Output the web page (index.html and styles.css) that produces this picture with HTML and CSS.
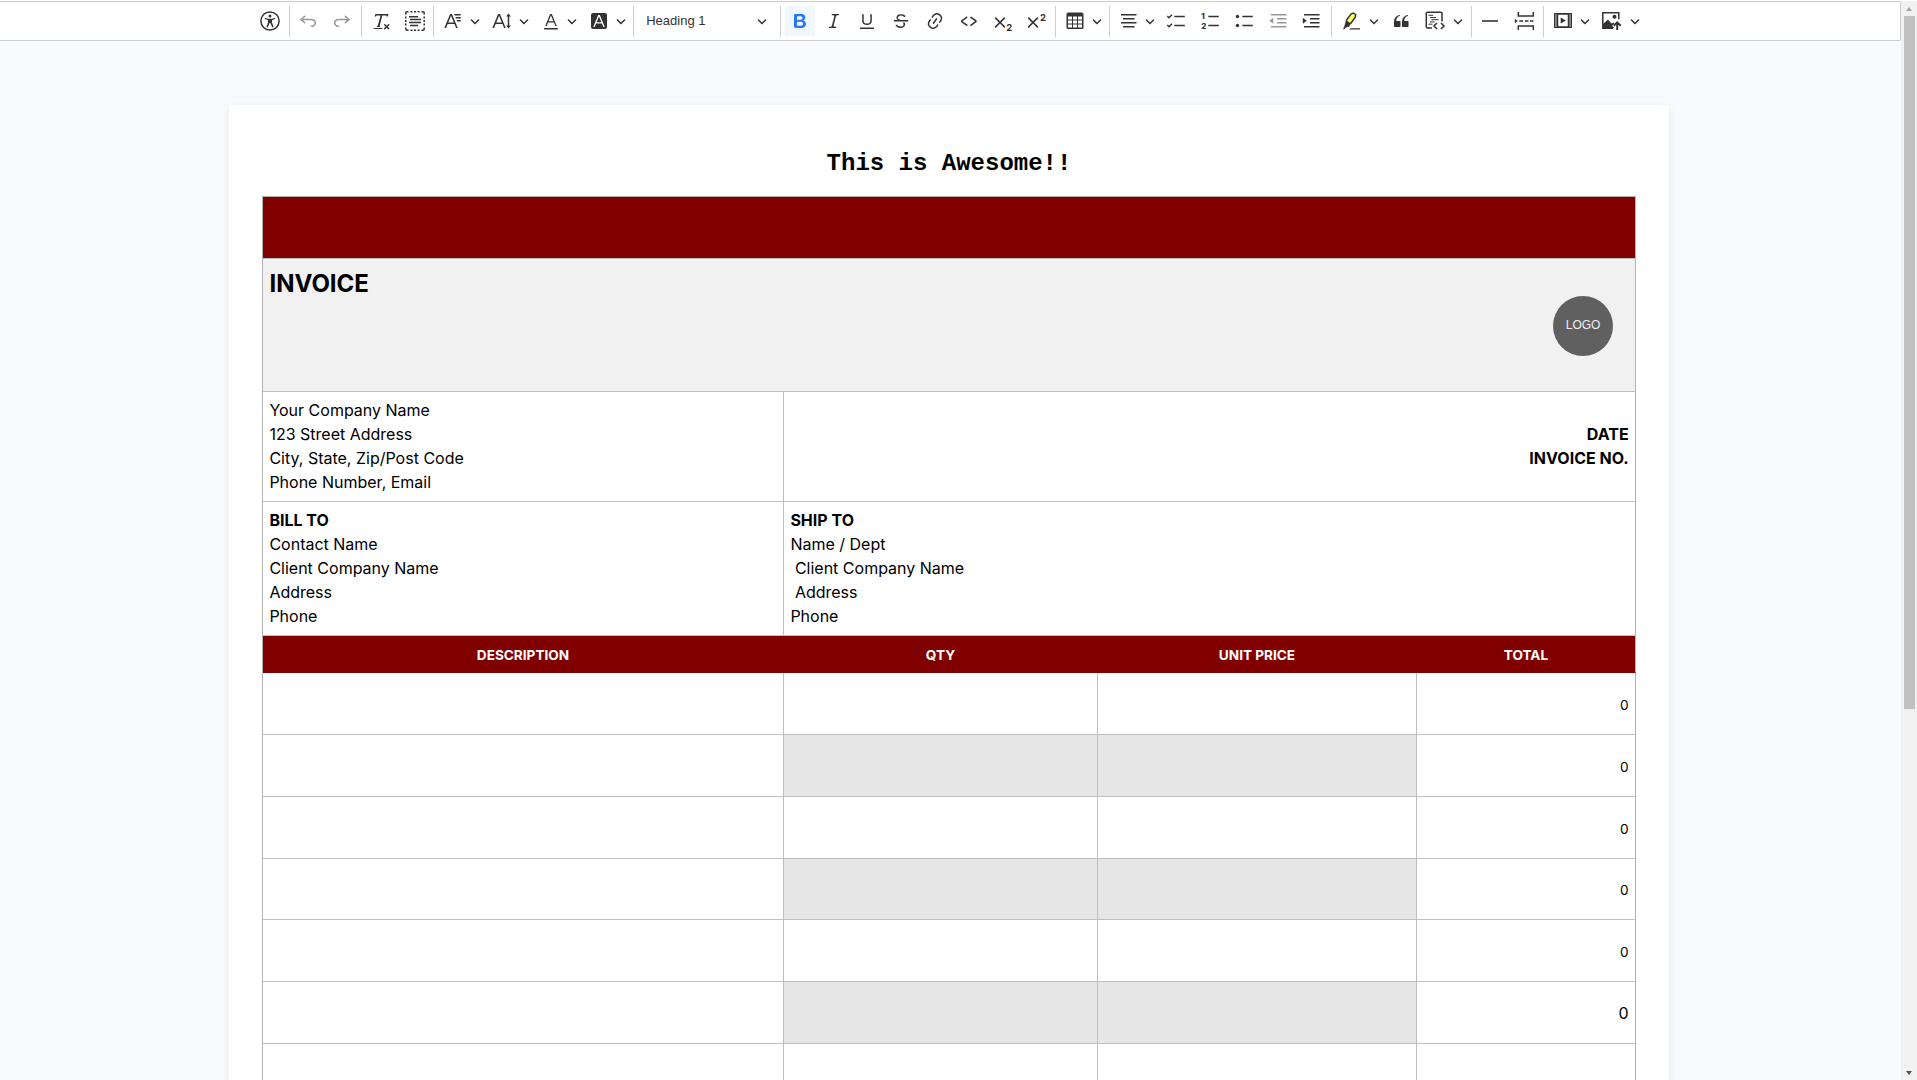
FILE: index.html
```html
<!DOCTYPE html>
<html lang="en">
<head>
<meta charset="utf-8">
<title>Document editor</title>
<link rel="stylesheet" href="styles.css">
</head>
<body>
<svg class="defs" aria-hidden="true">
  <symbol id="chev" viewBox="0 0 10 10"><path d="M.941 4.523a.75.75 0 1 1 1.06-1.06l3.006 3.005 3.005-3.005a.75.75 0 1 1 1.06 1.06l-3.549 3.55a.75.75 0 0 1-1.168-.136z"/></symbol>
  <symbol id="undo" viewBox="0 0 20 20"><path d="m5.042 9.367 2.189 1.837a.75.75 0 0 1-.965 1.149l-3.788-3.18a.747.747 0 0 1-.21-.284.75.75 0 0 1 .17-.945L6.23 4.762a.75.75 0 1 1 .964 1.15L4.863 7.866h8.917A.75.75 0 0 1 14 7.9a4 4 0 1 1-1.477 7.718l.344-1.489a2.5 2.5 0 1 0 1.094-4.73l.008-.032H5.042z"/></symbol>
  <symbol id="cross" viewBox="0 0 20 20"><path d="m7.03 10.349 3.818-3.819a.8.8 0 1 1 1.132 1.132L8.16 11.48l3.819 3.818a.8.8 0 1 1-1.132 1.132L7.03 12.61l-3.818 3.82a.8.8 0 1 1-1.132-1.132L5.9 11.48 2.08 7.662A.8.8 0 1 1 3.212 6.53l3.818 3.82z"/></symbol>
</svg>
<div class="app">
  <main class="editor">
    <div class="toolbar">
      <button class="btn"><svg class="icon" viewBox="0 0 20 20"><circle class="ln" cx="10" cy="10" r="9.1"/><circle cx="10" cy="4.9" r="1.5"/><path d="M5 6.9 8.4 7.7h3.2L15 6.9l.3 1.2-3.2 1v2.6l1.5 4.2-1.3.5L10.4 12h-.8l-1.9 4.4-1.3-.5 1.5-4.2V9.1l-3.2-1z"/></svg></button>
      <span class="sep"></span>
      <button class="btn off"><svg class="icon"><use href="#undo"/></svg></button>
      <button class="btn off"><svg class="icon flip"><use href="#undo"/></svg></button>
      <span class="sep"></span>
      <button class="btn"><svg class="icon" viewBox="0 0 20 20"><path d="M8.69 14.915c.053.052.173.083.36.093a.366.366 0 0 1 .345.485l-.003.01a.738.738 0 0 1-.697.497h-2.67a.374.374 0 0 1-.353-.496l.013-.038a.681.681 0 0 1 .644-.458c.197-.012.325-.043.386-.093a.28.28 0 0 0 .072-.11L9.592 4.5H6.269c-.359-.017-.609.013-.75.09-.142.078-.289.265-.442.563-.192.29-.516.464-.864.464H4.17a.43.43 0 0 1-.407-.569L4.46 3h13.08l-.62 2.043a.81.81 0 0 1-.775.574h-.114a.486.486 0 0 1-.486-.486c.001-.284-.054-.464-.167-.54-.112-.076-.367-.106-.766-.091h-3.28l-2.68 10.257c-.006.074.007.127.038.158zM3 17h8a.5.5 0 1 1 0 1H3a.5.5 0 1 1 0-1zm11.299 1.17a.75.75 0 1 1-1.06-1.06l1.414-1.415-1.415-1.414a.75.75 0 0 1 1.06-1.06l1.415 1.414 1.414-1.415a.75.75 0 1 1 1.06 1.06l-1.413 1.415 1.414 1.415a.75.75 0 0 1-1.06 1.06l-1.415-1.414-1.414 1.414z"/></svg></button>
      <button class="btn"><svg class="icon" viewBox="0 0 20 20"><path class="ln" d="M.8 3.5V2A1.2 1.2 0 0 1 2 .8h1.5M16.5.8H18A1.2 1.2 0 0 1 19.2 2v1.5M19.2 16.5V18a1.2 1.2 0 0 1-1.2 1.2h-1.5M3.5 19.2H2A1.2 1.2 0 0 1 .8 18v-1.5M5.5.8h2M9 .8h2M12.500.8h2M5.500 19.200h2M9 19.200h2M12.500 19.200h2M.8 5.500v2M.8 9v2M.8 12.500v2M19.200 5.500v2M19.200 9v2M19.200 12.500v2"/><path class="ln" d="M4 5.700h9M5 8.600h11M4 11.500h12M5 14.400h8"/></svg></button>
      <span class="sep"></span>
      <button class="btn drop"><svg class="icon" viewBox="0 0 20 20"><path d="M11.03 3h6.149a.75.75 0 1 1 0 1.5h-5.514L11.03 3zm1.27 3h4.879a.75.75 0 1 1 0 1.5h-4.244L12.3 6zm1.27 3h3.609a.75.75 0 1 1 0 1.5h-2.973L13.57 9zm-2.754 2.5L8.038 4.785 5.261 11.5h5.555zm.62 1.5H4.641l-1.666 4.028H1.312l5.789-14h1.875l5.789 14h-1.663L11.436 13z"/></svg><svg class="chev"><use href="#chev"/></svg></button>
      <button class="btn drop"><svg class="icon" viewBox="0 0 20 20"><path d="M9.816 11.5 7.038 4.785 4.261 11.5h5.555Zm.62 1.5H3.641l-1.666 4.028H.312l5.789-14h1.875l5.789 14h-1.663L10.436 13Z"/><path d="m16.500 2.500 2.400 3h-1.650v9h1.650l-2.400 3-2.400-3h1.650v-9h-1.650z"/></svg><svg class="chev"><use href="#chev"/></svg></button>
      <button class="btn drop"><svg class="icon" viewBox="0 0 20 20"><path d="M12.4 10.3 10 4.5l-2.4 5.800h4.800zm.5 1.200H7.100L5.700 15H4.200l5-12h1.600l5 12h-1.500L13 11.500zm3.500 7H3.600a.75.75 0 0 1 0-1.500h12.800a.75.75 0 0 1 0 1.500z"/></svg><svg class="chev"><use href="#chev"/></svg></button>
      <button class="btn drop"><svg class="icon" viewBox="0 0 20 20"><path d="M4 2h12a2 2 0 0 1 2 2v12a2 2 0 0 1-2 2H4a2 2 0 0 1-2-2V4a2 2 0 0 1 2-2zm8.380 9.262H7.620L10 5.506l2.380 5.756zm.532 1.285L14.340 16h1.426L10.804 4H9.196L4.234 16H5.660l1.428-3.453h5.824z"/></svg><svg class="chev"><use href="#chev"/></svg></button>
      <span class="sep"></span>
      <button class="btn heading"><span>Heading 1</span><svg class="chev"><use href="#chev"/></svg></button>
      <span class="sep"></span>
      <button class="btn on"><svg class="icon" viewBox="0 0 20 20"><path d="M10.187 17H5.773c-.637 0-1.092-.138-1.364-.415-.273-.277-.409-.718-.409-1.323V4.738c0-.617.14-1.062.419-1.332.279-.27.73-.406 1.354-.406h4.680c.69 0 1.288.041 1.793.124.506.083.96.242 1.360.478.341.197.644.447.906.750a3.262 3.262 0 0 1 .808 2.162c0 1.401-.722 2.426-2.167 3.075C15.050 10.175 16 11.315 16 13.010a3.756 3.756 0 0 1-2.296 3.504 6.100 6.100 0 0 1-1.517.377c-.571.073-1.238.110-2 .110zm-.217-6.217H7v4.087h3.069c1.977 0 2.965-.69 2.965-2.072 0-.707-.256-1.220-.768-1.537-.512-.319-1.277-.478-2.296-.478zM7 5.130v3.619h2.606c.729 0 1.292-.067 1.690-.2a1.600 1.600 0 0 0 .91-.765c.165-.267.247-.566.247-.897 0-.707-.26-1.176-.778-1.409-.519-.232-1.310-.348-2.375-.348H7z"/></svg></button>
      <button class="btn"><svg class="icon" viewBox="0 0 20 20"><path d="m9.586 14.633.021.004c-.036.335.095.655.393.962.082.083.173.15.274.201h1.474a.6.6 0 1 1 0 1.200H5.304a.6.6 0 0 1 0-1.200h1.150c.474-.07.809-.182 1.005-.334.157-.122.291-.32.404-.597l2.416-9.550a1.053 1.053 0 0 0-.281-.823 1.120 1.120 0 0 0-.442-.296H8.150a.6.6 0 0 1 0-1.200h6.443a.6.6 0 1 1 0 1.200h-1.195c-.376.056-.65.155-.823.296-.215.175-.423.439-.623.790l-2.366 9.347z"/></svg></button>
      <button class="btn"><svg class="icon" viewBox="0 0 20 20"><path d="M3 18v-1.500h14V18zM5.200 10V3.600c0-.4.4-.6.8-.6.3 0 .7.2.7.6v6.200c0 2 1.300 2.800 3.200 2.800 1.900 0 3.400-.9 3.400-2.900V3.600c0-.3.4-.5.8-.5.3 0 .7.2.7.5V10c0 2.700-2.200 4-4.900 4-2.600 0-4.700-1.200-4.700-4z"/></svg></button>
      <button class="btn"><svg class="icon" viewBox="0 0 20 20"><path d="M7 16.400c-.8-.4-1.500-.9-2.200-1.500a.6.6 0 0 1-.2-.5l.3-.6h1c1 1.200 2.100 1.700 3.700 1.700 1 0 1.800-.3 2.300-.6.6-.4.6-1.200.6-1.300.2-1.200-.9-2.100-.9-2.100h2.100c.3.7.4 1.200.4 1.700v.8l-.6 1.200c-.6.8-1.100 1-1.600 1.200a6 6 0 0 1-2.400.6c-1 0-1.800-.3-2.500-.6zM6.800 9 6 8.300c-.4-.5-.5-.8-.5-1.600 0-.7.1-1.300.5-1.800.4-.6 1-1 1.600-1.300a6.300 6.300 0 0 1 4.700 0 4 4 0 0 1 1.700 1l.3.7c0 .1.2.4-.2.7-.4.2-.9.1-1 0a3 3 0 0 0-1.200-1c-.4-.2-1-.3-2-.4-.7 0-1.400.2-2 .6-.8.6-1 .8-1 1.500 0 .8.5 1 1.200 1.500.6.4 1.100.7 1.900 1zM3 10.500V9h14v1.500z"/></svg></button>
      <button class="btn"><svg class="icon" viewBox="0 0 20 20"><path d="m11.077 15 .991-1.416a.75.75 0 1 1 1.229.86l-1.148 1.640a.748.748 0 0 1-.217.206 5.251 5.251 0 0 1-8.503-5.955.741.741 0 0 1 .12-.274l1.147-1.639a.75.75 0 1 1 1.228.86L4.933 10.700l.006.003a3.750 3.750 0 0 0 6.132 4.294l.006.004zm5.494-5.335a.748.748 0 0 1-.12.274l-1.147 1.639a.75.75 0 1 1-1.228-.86l.86-1.230a3.750 3.750 0 0 0-6.144-4.301l-.86 1.229a.75.75 0 0 1-1.229-.86l1.148-1.640a.748.748 0 0 1 .217-.206 5.251 5.251 0 0 1 8.503 5.955zm-4.563-2.532a.75.75 0 0 1 .184 1.045l-3.155 4.505a.75.75 0 1 1-1.229-.86l3.155-4.506a.75.75 0 0 1 1.045-.184z"/></svg></button>
      <button class="btn"><svg class="icon" viewBox="0 0 20 20"><path d="m12.500 5.700 5.200 3.900v1.300l-5.600 4c-.1.2-.3.2-.5.2-.3-.1-.6-.7-.6-1l.3-.4 4.700-3.500L11.500 7l-.2-.2c-.1-.3-.1-.6 0-.8.2-.2.5-.4.8-.4a.8.8 0 0 1 .4.1zm-5.200 0L2 9.600v1.300l5.600 4c.1.2.3.2.5.2.3-.1.7-.7.6-1 0-.1 0-.3-.2-.4l-5-3.500L8.200 7l.2-.2c.1-.3.1-.6 0-.8-.2-.2-.5-.4-.8-.4a.8.8 0 0 0-.3.1z"/></svg></button>
      <button class="btn"><svg class="icon" viewBox="0 0 20 20"><use href="#cross"/><text class="digit" x="13.300" y="19.500">2</text></svg></button>
      <button class="btn"><svg class="icon" viewBox="0 0 20 20"><use href="#cross"/><text class="digit" x="13.900" y="10">2</text></svg></button>
      <span class="sep"></span>
      <button class="btn drop"><svg class="icon" viewBox="0 0 20 20"><path d="M3 5.500v3h4v-3H3Zm0 4v3h4v-3H3Zm0 4v3h4v-3H3Zm5 3h4v-3H8v3Zm5 0h4v-3h-4v3Zm4-4v-3h-4v3h4Zm0-4v-3h-4v3h4Zm1.500 8A1.500 1.500 0 0 1 17 18H3a1.500 1.500 0 0 1-1.500-1.500V3c.222-.863 1.068-1.500 2-1.500h13c.932 0 1.778.637 2 1.500v13.500Zm-6.500-4v-3H8v3h4Zm0-4v-3H8v3h4Z"/></svg><svg class="chev"><use href="#chev"/></svg></button>
      <span class="sep"></span>
      <button class="btn drop"><svg class="icon" viewBox="0 0 20 20"><path class="ln" d="M2 3.750h15.500M4 7.750h11.500M2 11.750h15.500M4 15.750h11.500"/></svg><svg class="chev"><use href="#chev"/></svg></button>
      <button class="btn"><svg class="icon" viewBox="0 0 20 20"><path class="ln" d="M7.300 5.500h10.500M7.300 14.500h10.500"/><path class="ln" d="m.3 5 1.700 1.700L5 3.700M.3 14l1.700 1.700 3-3"/></svg></button>
      <button class="btn"><svg class="icon" viewBox="0 0 20 20"><path class="ln" d="M7.300 5.500h10.500M7.300 14.500h10.500"/><text class="num" x=".2" y="8">1</text><text class="num" x=".2" y="17.800">2</text></svg></button>
      <button class="btn"><svg class="icon" viewBox="0 0 20 20"><path class="ln" d="M7.300 5.500h10.500M7.300 14.500h10.500"/><circle cx="2.500" cy="5.500" r="1.700"/><circle cx="2.500" cy="14.500" r="1.700"/></svg></button>
      <button class="btn off"><svg class="icon" viewBox="0 0 20 20"><path class="ln" d="M2 3.750h15.500M8 7.750h9.500M8 11.750h9.500M2 15.750h15.500"/><path d="M4.300 6.800v6L.3 9.800z"/></svg></button>
      <button class="btn"><svg class="icon" viewBox="0 0 20 20"><path class="ln" d="M2 3.750h15.500M8 7.750h9.500M8 11.750h9.500M2 15.750h15.500"/><path d="M.8 6.800v6l4-3z"/></svg></button>
      <span class="sep"></span>
      <button class="btn split"><svg class="icon" viewBox="0 0 20 20"><path class="marker" d="M10.300 3.200 13 2.300l1.500 1.700-.4 2.500-4.300 6.300-4.600-2.800z"/><path class="ln" d="m5.200 9.500 5-6.600L12.500 2l2.200 1.700-.4 2.600-4.800 6.500"/><path d="m5 9 5 3.500-2 3.200-3.200.7L3.600 18 2 18.300l1.500-3.600zM9.500 17.200h9.500v1.400H8z"/></svg><svg class="chev"><use href="#chev"/></svg></button>
      <button class="btn"><svg class="icon" viewBox="0 0 20 20"><path d="M3 10.423a6.500 6.500 0 0 1 6.056-6.408l.038.670C6.448 5.423 5.354 7.663 5.220 10H9c.552 0 .5.432.5.986v4.511c0 .554-.448.503-1 .503h-5c-.552 0-.5-.449-.5-1.003v-4.574zm8 0a6.500 6.500 0 0 1 6.056-6.408l.038.670c-2.646.739-3.740 2.979-3.873 5.315H17c.552 0 .5.432.5.986v4.511c0 .554-.448.503-1 .503h-5c-.552 0-.5-.449-.5-1.003v-4.574z"/></svg></button>
      <button class="btn split"><svg class="icon" viewBox="0 0 20 20"><path class="ln" d="M7 17H2.500A1.200 1.200 0 0 1 1.300 15.800V2.500A1.200 1.200 0 0 1 2.500 1.300h13.200A1.200 1.200 0 0 1 17 2.500v8"/><path class="thin" d="M3.500 4.300H8M5 6.500h6M6.500 8.700h7M5 10.900h4.500M3.500 13.200h4"/><path class="ln" d="m12 12-3 3 3 3M16 12l3 3-3 3"/></svg><svg class="chev"><use href="#chev"/></svg></button>
      <span class="sep"></span>
      <button class="btn"><svg class="icon" viewBox="0 0 20 20"><path d="M2 9.200h16v1.600H2z"/></svg></button>
      <button class="btn"><svg class="icon" viewBox="0 0 20 20"><path class="ln" d="M4.300 1v4h15V1M4.300 19v-4h15v4M5.200 10h4M11 10h3.500M16 10h3.500"/><path d="M.8 7.800v4.400L3.800 10z"/></svg></button>
      <span class="sep"></span>
      <button class="btn drop"><svg class="icon" viewBox="0 0 20 20"><path class="film" d="M1 2h4v15H1zM15 2h4v15h-4z"/><path class="thin" d="M1.500 2.500h17v14h-17z"/><path class="ln" d="M4 3h12M4 16h12M4.500 3v13M15.500 3v13"/><path d="m7.700 6.500 5 3-5 3z"/></svg><svg class="chev"><use href="#chev"/></svg></button>
      <button class="btn split"><svg class="icon" viewBox="0 0 20 20"><path class="ln" d="M11 17.300H.8V1.700h16v6.500"/><circle cx="12.500" cy="5.700" r="2"/><path d="M1 17v-4l5-4.500 3.500 4 2.500-1v1.500l-1.800 1.500L12 17z"/><path class="arrow" d="M15.200 19v-7M11.700 14.800l3.500-3.500 3.500 3.500"/></svg><svg class="chev"><use href="#chev"/></svg></button>
    </div>
    <article class="page">
      <h1 class="title">This is Awesome!!</h1>
      <table class="invoice">
        <colgroup><col class="c1"><col class="c2"><col class="c3"><col class="c4"></colgroup>
        <tbody>
        <tr class="banner"><td colspan="4"></td></tr>
        <tr class="head"><td colspan="4"><div class="head-row"><h2>INVOICE</h2><div class="logo">LOGO</div></div></td></tr>
        <tr class="company"><td>Your Company Name<br>123 Street Address<br>City, State, Zip/Post Code<br>Phone Number, Email</td><td class="right" colspan="3"><strong>DATE<br>INVOICE NO.</strong></td></tr>
        <tr class="parties"><td><strong>BILL TO</strong><br>Contact Name<br>Client Company Name<br>Address<br>Phone</td><td colspan="3"><strong>SHIP TO</strong><br>Name / Dept<br>&nbsp;Client Company Name<br>&nbsp;Address<br>Phone</td></tr>
        <tr class="labels"><th>DESCRIPTION</th><th>QTY</th><th>UNIT PRICE</th><th>TOTAL</th></tr>
        <tr class="item"><td></td><td></td><td></td><td>0</td></tr>
        <tr class="item shade"><td></td><td></td><td></td><td>0</td></tr>
        <tr class="item"><td></td><td></td><td></td><td>0</td></tr>
        <tr class="item shade short"><td></td><td></td><td></td><td>0</td></tr>
        <tr class="item"><td></td><td></td><td></td><td>0</td></tr>
        <tr class="item shade large"><td></td><td></td><td></td><td>0</td></tr>
        <tr class="item"><td></td><td></td><td></td><td></td></tr>
        </tbody>
      </table>
    </article>
  </main>
  <div class="scrollbar"><span class="up"></span><span class="thumb"></span><span class="down"></span></div>
</div>
</body>
</html>
```
FILE: styles.css
```css
* { box-sizing: border-box; }
body { margin: 0; height: 1080px; overflow: hidden; background: #fff; font-family: Inter, sans-serif; font-size: 16px; color: #000; }
.defs { display: none; }
.app { display: flex; height: 1080px; padding-top: 1px; }
.editor { flex: 1; height: 1079px; overflow: hidden; background: #f9fafc; }

.toolbar { display: flex; align-items: center; gap: 3.9px; height: 40px; padding-left: 254.8px; background: #fff; border: 1px solid #ccced1; border-left: 0; border-radius: 0 2px 2px 0; }
.btn { flex: none; display: flex; align-items: center; width: 29.9px; height: 30px; padding: 0 4.95px; border: 0; border-radius: 2px; background: none; color: #333; font: 13px "Liberation Sans", sans-serif; }
.sep { flex: none; width: 1px; height: 31px; background: #ccced1; }
.icon { flex: none; width: 20px; height: 20px; fill: currentColor; overflow: visible; }
.chev { flex: none; width: 10px; height: 10px; margin-left: 6.6px; fill: currentColor; }
.flip { transform: scaleX(-1); }
.drop { width: 44.8px; padding-right: 0; }
.split { width: 46.5px; padding-right: 0; }
.split .chev { margin-left: 8.2px; }
.heading { width: 138.1px; padding: 0 9.2px 0 8.2px; justify-content: space-between; }
.heading span { padding-bottom: 1px; }
.off .icon { opacity: .5; }
.on { background: #f0f7ff; color: #2977ff; }
.ln { fill: none; stroke: currentColor; stroke-width: 1.5; }
.thin { fill: none; stroke: currentColor; stroke-width: 1; }
.arrow { fill: none; stroke: currentColor; stroke-width: 2; }
.marker { fill: #fdfd5e; }
.film { fill: #888; }
.digit { font: bold 9.5px Inter, sans-serif; }
.num { font: 800 8px Inter, sans-serif; }

.page { width: 1440px; height: 1300px; margin: 64px 0 0 229px; padding: 44px 33px 0; background: #fff; border-radius: 2px; box-shadow: 0 2px 8px rgba(0, 0, 0, .06); }
.title { margin: 0 0 17px; height: 30px; font: bold 24px/30px "Liberation Mono", monospace; text-align: center; }

.invoice { width: 1374px; table-layout: fixed; border-collapse: separate; border-spacing: 0; border: 1px solid #b3b3b3; border-width: 1px 0 0 1px; line-height: 24px; }
.c1 { width: 521px; }
.c2 { width: 314px; }
.c3 { width: 319px; }
.c4 { width: 219px; }
.invoice td, .invoice th { padding: 0 6.4px; border: solid #bfbfbf; border-width: 0 1px 1px 0; }
.invoice td:last-child, .invoice th:last-child { border-right-color: #b3b3b3; }
.banner td { height: 62px; background: #800000; }
.head td { height: 133px; background: #f1f1f1; }
.head-row { display: flex; justify-content: space-between; align-items: center; height: 132px; padding-right: 15.6px; }
.head-row h2 { align-self: flex-start; margin: 7px 0 0; font-size: 24px; line-height: 36px; }
.logo { width: 60px; height: 60px; margin-top: 1px; border-radius: 50%; background: #606060; color: #eee; font: 12px/58px "Liberation Sans", sans-serif; text-align: center; }
.invoice .company td { height: 110px; padding-bottom: 2px; }
.invoice .parties td { height: 134px; padding-bottom: 2px; }
.right { text-align: right; }
.invoice .labels th { height: 37px; padding-top: 1px; background: #800000; color: #fff; font-size: 13.6px; border-color: #800000; }
.invoice .labels th:last-child { border-right-color: #b3b3b3; }
.invoice .item td { height: 62px; padding-top: 2px; font-size: 13.6px; text-align: right; }
.invoice .short td { height: 61px; }
.invoice .large td { padding-top: 0; font-size: 16px; }
.shade td:nth-child(2), .shade td:nth-child(3) { background: #e6e6e6; }

.scrollbar { flex: none; display: flex; flex-direction: column; align-items: center; width: 16px; padding: 6px 0 5px 0; background: #f1f1f1; }
.up, .down { width: 0; height: 0; border: solid transparent; border-width: 0 3.5px; }
.up { border-bottom: 4px solid #a3a3a3; }
.down { border-top: 4px solid #505050; margin-top: auto; }
.thumb { width: 11px; height: 693px; margin-top: 5px; background: #c1c1c1; }
```
